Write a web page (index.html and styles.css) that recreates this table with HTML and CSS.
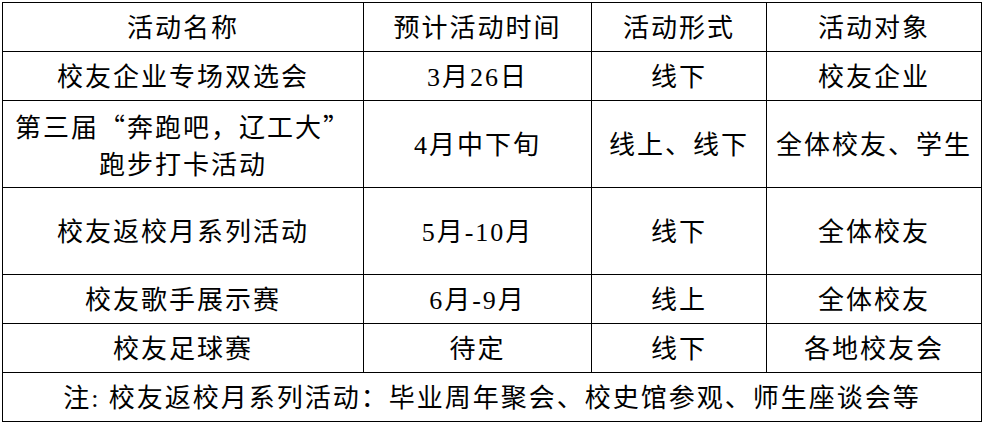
FILE: index.html
```html
<!DOCTYPE html>
<html lang="zh-CN">
<head>
<meta charset="utf-8">
<title>活动安排</title>
<link rel="stylesheet" href="styles.css">
</head>
<body>
<table class="plan">
  <colgroup>
    <col class="c1"><col class="c2"><col class="c3"><col class="c4">
  </colgroup>
  <tr class="short"><td>活动名称</td><td>预计活动时间</td><td>活动形式</td><td>活动对象</td></tr>
  <tr class="short"><td>校友企业专场双选会</td><td>3月26日</td><td>线下</td><td>校友企业</td></tr>
  <tr class="tall"><td class="two">第三届<span class="cjk">“</span>奔跑吧，辽工大<span class="cjk">”</span><br>跑步打卡活动</td><td>4月中下旬</td><td>线上、线下</td><td>全体校友、学生</td></tr>
  <tr class="tall"><td>校友返校月系列活动</td><td>5月-10月</td><td>线下</td><td>全体校友</td></tr>
  <tr class="short"><td>校友歌手展示赛</td><td>6月-9月</td><td>线上</td><td>全体校友</td></tr>
  <tr class="short"><td>校友足球赛</td><td>待定</td><td>线下</td><td>各地校友会</td></tr>
  <tr class="short"><td class="note" colspan="4">注: 校友返校月系列活动：毕业周年聚会、校史馆参观、师生座谈会等</td></tr>
</table>
</body>
</html>
```
FILE: styles.css
```css
html, body {
  margin: 0;
  padding: 0;
  background: #ffffff;
}
.plan {
  margin: 2px 0 0 2px;
  width: 979px;
  border-collapse: collapse;
  table-layout: fixed;
  font-family: "Liberation Serif", "Noto Sans CJK SC", serif;
  font-size: 26px;
  letter-spacing: 2px;
  color: #000000;
}
.c1 { width: 361px; }
.c2 { width: 228px; }
.c3 { width: 175px; }
.c4 { width: 215px; }
.plan td {
  border: 1px solid #000000;
  padding: 4px 0 0 0;
  text-align: center;
  vertical-align: middle;
  line-height: 30px;
  font-weight: normal;
}
.short { height: 49px; }
.tall { height: 87px; }
.plan td.two { line-height: 37px; padding-top: 2px; }
.cjk { font-family: "Noto Sans CJK SC", sans-serif; }
```
